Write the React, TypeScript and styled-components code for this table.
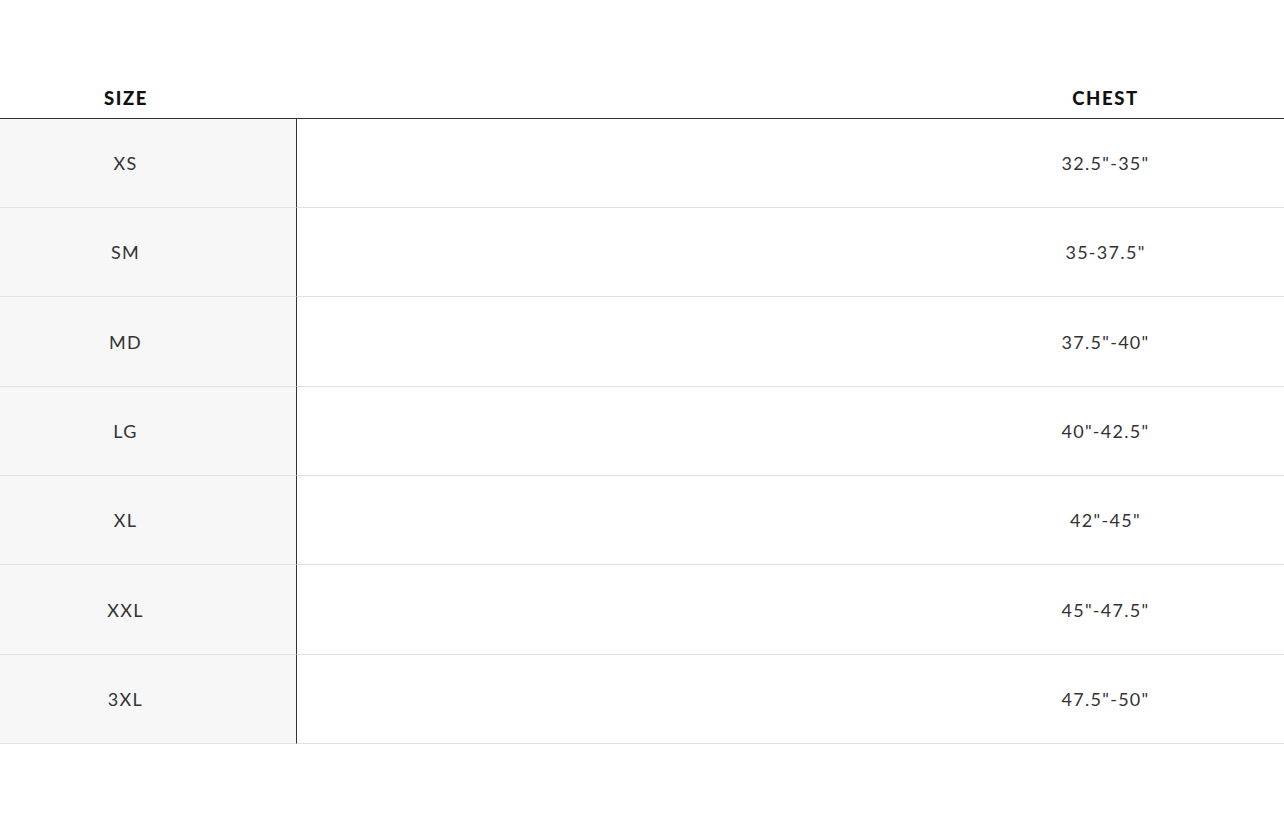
import React from "react";
import styled, { createGlobalStyle } from "styled-components";

const Global = createGlobalStyle`
  html, body { margin: 0; padding: 0; background: #fff; }
  body { font-family: Lato, "Open Sans", sans-serif; }
`;

const Page = styled.div`
  width: 1284px;
  height: 832px;
  padding-top: 78px;
  box-sizing: border-box;
  overflow: hidden;
`;

const Table = styled.div`
  display: grid;
  grid-template-columns: 297px 1fr;
`;

const HeadCell = styled.div<{ $pad: string }>`
  height: 40px;
  display: flex;
  align-items: center;
  justify-content: center;
  padding: ${(p) => p.$pad};
  border-bottom: 1px solid #333;
  font-weight: 900;
  font-size: 18.5px;
  letter-spacing: 1.6px;
  color: #111;
`;

const Cell = styled.div<{ $first?: boolean; $pad: string; $h: number }>`
  display: flex;
  align-items: center;
  justify-content: center;
  padding: ${(p) => p.$pad};
  border-bottom: 1px solid #e0e0e0;
  background: ${(p) => (p.$first ? "#f7f7f7" : "#fff")};
  border-right: ${(p) => (p.$first ? "1px solid #333" : "none")};
  box-sizing: border-box;
  height: ${(p) => p.$h}px;
  font-size: 18px;
  letter-spacing: 1.3px;
  color: #333;
`;

const rows: [string, string, number][] = [
  ["XS", "32.5\"-35\"", 89],
  ["SM", "35-37.5\"", 89],
  ["MD", "37.5\"-40\"", 90],
  ["LG", "40\"-42.5\"", 89],
  ["XL", "42\"-45\"", 89],
  ["XXL", "45\"-47.5\"", 90],
  ["3XL", "47.5\"-50\"", 89],
];

const PAD1 = "0 45px 0 0";
const PAD2 = "0 0 0 630px";

export default function App() {
  return (
    <Page>
      <Global />
      <Table>
        <HeadCell $pad={PAD1}>SIZE</HeadCell>
        <HeadCell $pad={PAD2}>CHEST</HeadCell>
        {rows.map(([s, c, h]) => (
          <React.Fragment key={s}>
            <Cell $first $pad={PAD1} $h={h}>{s}</Cell>
            <Cell $pad={PAD2} $h={h}>{c}</Cell>
          </React.Fragment>
        ))}
      </Table>
    </Page>
  );
}
